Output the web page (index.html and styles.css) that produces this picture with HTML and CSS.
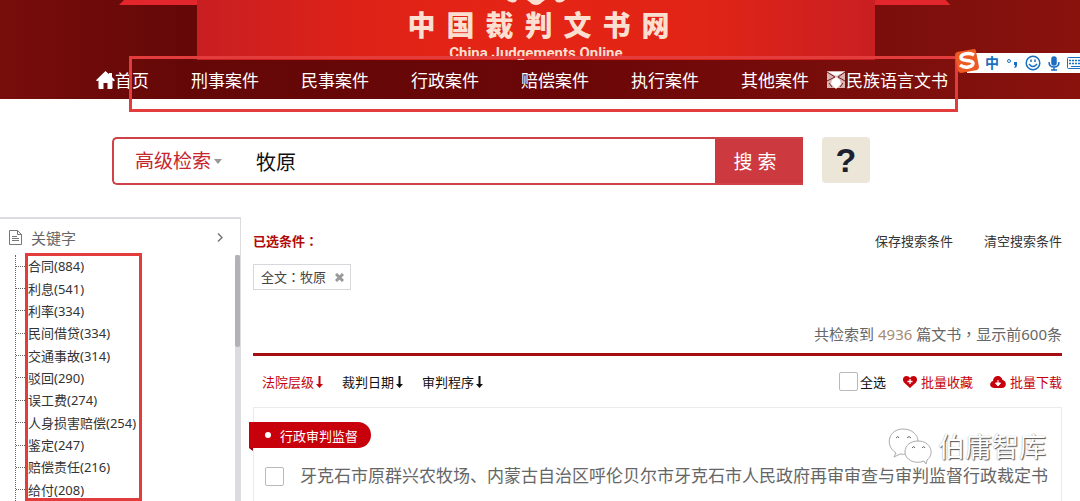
FILE: index.html
```html
<!DOCTYPE html>
<html lang="zh-CN">
<head>
    <meta charset="UTF-8">
    <meta name="viewport" content="width=device-width, initial-scale=1.0">
    <title>中国裁判文书网</title>
    <link rel="stylesheet" href="styles.css">
</head>
<body>
    <header class="header">
        <svg class="roof" viewBox="0 0 836 5" preserveAspectRatio="none" aria-hidden="true">
            <path d="M5 0H831L836 5H0Z" fill="#e3262b"/>
        </svg>
        <div class="banner">
            <svg class="emblem" width="58" height="5" viewBox="0 0 58 5" aria-hidden="true">
                <path d="M0 0H10Q9 3 5 2.500Q2 2 0 0ZM20 0H38Q35 2 33 4Q29 6 25 4Q23 2 20 0ZM48 0H58Q56 2 53 2.500Q49 3 48 0Z" fill="#fbdfd0"/>
            </svg>
            <h1 class="site-title">中国裁判文书网</h1>
            <p class="site-sub">China Judgements Online</p>
        </div>
        <nav class="nav">
            <a class="nav-home" href="#home">
                <svg width="19" height="18" viewBox="0 0 19 18" aria-hidden="true">
                    <path d="M9.500 0L13 3.300V2H16V6L19 9.200L17.800 10.300L16.500 9.500V17Q16.500 18 15.500 18H11.500V12H7.500V18H3.500Q2.500 18 2.500 17V9.500L1.200 10.300L0 9.200Z" fill="#fff"/>
                </svg>首页</a>
            <a href="#criminal">刑事案件</a>
            <a href="#civil">民事案件</a>
            <a href="#admin">行政案件</a>
            <a href="#compensation">赔偿案件</a>
            <a href="#execute">执行案件</a>
            <a class="nav-other" href="#other">其他案件</a>
            <a href="#language">
                <svg width="19" height="18" viewBox="0 0 19 18" aria-hidden="true">
                    <path d="M0 0H18V17H0Z" fill="#d8b5b3"/>
                    <path d="M1 1H17L9 5Z" fill="#fff"/>
                    <path d="M0 1L8 6L0 10M18 1L11 6L18 10M2 12L5 16M16 12L13 16" fill="none" stroke="#7a1d1d"/>
                    <path d="M5 9L9 6L13 9L14 13L9 18L4 13Z" fill="#fff"/>
                </svg>民族语言文书</a>
        </nav>
    </header>

    <form class="search">
        <div class="search-box">
            <select class="search-type" aria-label="检索方式">
                <option>高级检索</option>
            </select>
            <svg class="caret" width="8" height="5" viewBox="0 0 8 5" aria-hidden="true"><path d="M0 0H8L4 5Z" fill="#999"/></svg>
            <input class="search-input" type="text" value="牧原" aria-label="检索内容">
            <button class="search-btn" type="button">搜 索</button>
        </div>
        <button class="help-btn" type="button">?</button>
    </form>

    <div class="page">
        <aside class="sidebar">
            <h2 class="side-title">
                <svg width="13" height="15" viewBox="0 0 13 15" fill="none" stroke="#777" aria-hidden="true">
                    <path d="M.5 .5H8.500L12.500 4.500V14.500H.5ZM8.500 .5V4.500H12.500M3 6.500H8M3 8.500H10M3 10.500H10"/>
                </svg>
                <span>关键字</span>
                <svg class="side-arrow" width="6" height="9" viewBox="0 0 6 9" fill="none" stroke="#777" stroke-width="1.500" aria-hidden="true"><path d="M1 .5L5 4.500L1 8.500"/></svg>
            </h2>
            <div class="tree">
                <ul class="tree-list">
                    <li><a href="#k1">合同(884)</a></li>
                    <li><a href="#k2">利息(541)</a></li>
                    <li><a href="#k3">利率(334)</a></li>
                    <li><a href="#k4">民间借贷(334)</a></li>
                    <li><a href="#k5">交通事故(314)</a></li>
                    <li><a href="#k6">驳回(290)</a></li>
                    <li><a href="#k7">误工费(274)</a></li>
                    <li><a href="#k8">人身损害赔偿(254)</a></li>
                    <li><a href="#k9">鉴定(247)</a></li>
                    <li><a href="#k10">赔偿责任(216)</a></li>
                    <li><a href="#k11">给付(208)</a></li>
                </ul>
                <div class="scrollbar"><div class="thumb"></div></div>
                <div class="mark mark-tree"></div>
            </div>
        </aside>

        <main class="main">
            <div class="selected">
                <strong>已选条件<span class="mid" lang="zh-TW">：</span></strong>
                <a class="save" href="#save">保存搜索条件</a>
                <a href="#clear">清空搜索条件</a>
            </div>
            <div class="tag">全文<span class="mid" lang="zh-TW">：</span>牧原
                <button class="tag-close" type="button" aria-label="删除">
                    <svg width="9" height="9" viewBox="0 0 9 9" stroke="#999" stroke-width="3"><path d="M1 1L8 8M8 1L1 8"/></svg>
                </button>
            </div>
            <p class="count">共检索到 <span class="num">4936</span> 篇文书<span class="mid" lang="zh-TW">，</span>显示前600条</p>

            <div class="toolbar">
                <a class="sort active" href="#level">法院层级<svg width="7" height="12" viewBox="0 0 7 12" aria-hidden="true"><path d="M2.500 0H4.500V8H7L3.500 12L0 8H2.500Z" fill="currentColor"/></svg></a>
                <a class="sort" href="#date">裁判日期<svg width="7" height="12" viewBox="0 0 7 12" aria-hidden="true"><path d="M2.500 0H4.500V8H7L3.500 12L0 8H2.500Z" fill="currentColor"/></svg></a>
                <a class="sort" href="#program">审判程序<svg width="7" height="12" viewBox="0 0 7 12" aria-hidden="true"><path d="M2.500 0H4.500V8H7L3.500 12L0 8H2.500Z" fill="currentColor"/></svg></a>
                <label class="check-all"><input class="check" type="checkbox">全选</label>
                <a class="batch" href="#fav">
                    <svg width="14" height="12" viewBox="0 0 14 12" aria-hidden="true">
                        <path d="M7 12L1 6.500C-1 4 0 0 3.500 0Q6 0 7 2Q8 0 10.500 0C14 0 15 4 13 6.500Z" fill="#c7000b"/>
                        <path d="M7 3V8M4.500 5.500H9.500" stroke="#fff" stroke-width="1.300"/>
                    </svg>批量收藏</a>
                <a class="batch" href="#down">
                    <svg width="16" height="12" viewBox="0 0 16 12" aria-hidden="true">
                        <path d="M4 12C-1 12-1 6 3 5C3-1 11-2 12.500 4C17 5 17 12 12 12Z" fill="#c7000b"/>
                        <path d="M8 4V7H5.500L8 10L10.500 7H8" stroke="#fff" fill="#fff"/>
                    </svg>批量下载</a>
            </div>

            <article class="item">
                <div class="label">行政审判监督</div>
                <div class="item-title">
                    <input class="check" type="checkbox" id="doc1">
                    <label for="doc1">牙克石市原群兴农牧场、内蒙古自治区呼伦贝尔市牙克石市人民政府再审审查与审判监督行政裁定书</label>
                </div>
            </article>
        </main>
    </div>

    <div class="mark mark-nav"></div>

    <!-- 输入法工具条 -->
    <div class="ime">
        <svg class="ime-logo" width="26" height="24" viewBox="0 0 26 24" aria-hidden="true">
            <path d="M3 3L20 0Q22 0 22 2L25 18Q25 20 23 21L7 24Q5 24 4 22L1 6Q1 4 3 3Z" fill="#ec5b23"/>
            <path d="M20 6C15 3 6 5 7 9C8 13 18 10 19 14C19 18 11 20 6 16" fill="none" stroke="#fff" stroke-width="3.500"/>
        </svg>
        <span class="ime-text">中</span>
        <svg width="12" height="12" viewBox="0 0 12 12" aria-hidden="true">
            <circle cx="3" cy="4" r="1.500" fill="none" stroke="#1b6fc0"/>
            <path d="M8 5H11V8Q11 11 8 11Q9 10 9 8H8Z" fill="#1b6fc0"/>
        </svg>
        <svg width="16" height="16" viewBox="0 0 16 16" fill="none" stroke="#1b6fc0" stroke-width="1.500" aria-hidden="true">
            <circle cx="8" cy="8" r="6.800"/><path d="M6 4.500V7M10 4.500V7M4 9Q8 14 12 9"/>
        </svg>
        <svg width="12" height="15" viewBox="0 0 12 15" fill="none" stroke="#1b6fc0" stroke-width="1.500" aria-hidden="true">
            <rect x="4" y="1" width="4" height="8" rx="2" fill="#1b6fc0"/><path d="M1 6Q1 11 6 11Q11 11 11 6M6 11V14M3 14H9"/>
        </svg>
        <svg width="18" height="12" viewBox="0 0 18 12" fill="none" stroke="#1b6fc0" aria-hidden="true">
            <rect x=".5" y=".5" width="17" height="11" rx="1"/><path d="M2 3.500H16M2 6.500H16" stroke-width="1.500" stroke-dasharray="2 1"/><path d="M4 9.500H14"/>
        </svg>
    </div>

    <div class="watermark">
        <svg width="46" height="38" viewBox="0 0 46 38" fill="#fff" stroke="#aaa" aria-hidden="true">
            <path d="M7 29L9 25C-3 17 2 1 16 1C25 1 31 7 31 13C31 21 23 28 13 26Z"/>
            <path d="M39 36L37 33C27 37 18 31 18 24C18 17 24 13 31 13C44 13 48 26 40 32Z"/>
            <path d="M9 10Q11 7 12 10M20 10Q22 7 24 10M25 20Q27 17 28 20M35 20Q37 17 38 20" fill="none" stroke="#666"/>
        </svg>
        <span>伯庸智库</span>
    </div>
</body>
</html>
```
FILE: styles.css
```css
* {
    box-sizing: border-box;
}
body {
    margin: 0;
    min-height: 100vh;
    display: flex;
    flex-direction: column;
    position: relative;
    overflow-x: hidden;
    background-color: #fff;
    color: #333;
    font-family: "Noto Sans", "Noto Sans CJK SC", sans-serif;
    font-size: 13px;
}
a {
    color: inherit;
    text-decoration: none;
}
button, input, select {
    font-family: inherit;
    margin: 0;
    padding: 0;
}
h1, h2, p, ul {
    margin: 0;
    padding: 0;
    font-weight: normal;
}
/* 全角标点居中 */
.mid {
    font-family: "Noto Sans CJK TC", sans-serif;
}

/* 头部 */
.header {
    position: relative;
    background: linear-gradient(90deg, #780d0c 0%, #640807 17%, #6a0607 50%, #7c0f0c 84%, #8a120d 100%);
}
.roof {
    position: absolute;
    left: 11%;
    top: 0;
    width: 77%;
    height: 5px;
}
.banner {
    position: relative;
    height: 60px;
    margin: 0 19% 0 197px;
    display: flex;
    flex-direction: column;
    align-items: center;
    overflow: hidden;
    background: linear-gradient(90deg, #c81f22 0%, #df2217 25%, #e52515 50%, #e02416 75%, #c91f22 100%);
    color: #fbdfd0;
}
.emblem {
    display: block;
    flex: none;
}
.site-title {
    font-size: 28px;
    font-weight: 900;
    line-height: 40px;
    letter-spacing: 11px;
    padding-left: 16px;
}
.site-sub {
    font-family: Roboto, "Liberation Sans", sans-serif;
    font-size: 15px;
    font-weight: bold;
    line-height: 16px;
}
.nav {
    display: flex;
    align-items: center;
    height: 39px;
    padding-left: 96px;
    color: #fff;
    font-size: 17px;
    white-space: nowrap;
}
.nav a {
    display: flex;
    align-items: center;
    margin-right: 42px;
}
.nav .nav-other {
    margin-right: 18px;
}

/* 检索框 */
.search {
    display: flex;
    gap: 19px;
    padding: 38px 210px 32px 112px;
}
.search-box {
    flex: 1;
    display: flex;
    align-items: center;
    height: 48px;
    border: 2px solid #cf4247;
    border-right: 0;
    border-radius: 5px 0 0 5px;
}
.search-type {
    appearance: none;
    border: 0;
    background: none;
    margin-left: 21px;
    color: #c7262c;
    font-size: 19px;
}
.caret {
    margin-left: 2px;
}
.search-input {
    flex: 1;
    min-width: 0;
    margin-left: 34px;
    border: 0;
    outline: 0;
    color: #111;
    font-size: 20px;
}
.search-btn {
    align-self: stretch;
    width: 88px;
    padding-right: 8px;
    border: 0;
    background-color: #cc393f;
    color: #fff;
    font-size: 19px;
}
.help-btn {
    width: 48px;
    height: 46px;
    border: 0;
    border-radius: 4px;
    background-color: #ebe6d7;
    color: #1d2030;
    font-family: "Liberation Sans", Arial, sans-serif;
    font-size: 34px;
    font-weight: bold;
}

.page {
    flex: 1;
    display: flex;
}

/* 左侧关键字 */
.sidebar {
    width: 241px;
    display: flex;
    flex-direction: column;
    border-top: 2px solid #dcdce0;
    border-right: 1px solid #dcdce0;
}
.side-title {
    display: flex;
    align-items: center;
    gap: 9px;
    height: 36px;
    padding: 0 17px 0 9px;
    color: #666;
    font-size: 15px;
}
.side-arrow {
    margin-left: auto;
}
.tree {
    flex: 1;
    display: flex;
    position: relative;
}
.tree-list {
    flex: 1;
    display: grid;
    grid-auto-rows: 1fr;
    margin-left: 15px;
    border-left: 1px dotted #666;
    list-style: none;
}
.tree-list li {
    display: flex;
    align-items: center;
    line-height: 20px;
}
.tree-list li::before {
    content: "";
    width: 11px;
    margin-right: 1px;
    border-top: 1px dotted #666;
}
.scrollbar {
    width: 5px;
    background-color: #dcdce0;
}
.thumb {
    height: 92px;
    border-radius: 2px;
    background-color: #b3b1b6;
}

/* 右侧结果 */
.main {
    flex: 1;
    min-width: 0;
    display: flex;
    flex-direction: column;
    padding: 11px 18px 0 12px;
}
.selected {
    display: flex;
    align-items: center;
    height: 24px;
}
.selected strong {
    color: #b00a0a;
}
.save {
    margin: 0 31px 0 auto;
}
.tag {
    align-self: flex-start;
    display: flex;
    align-items: center;
    height: 26px;
    margin-top: 12px;
    padding: 0 6px 0 7px;
    border: 1px solid #d8d8dc;
    color: #444;
    line-height: 20px;
}
.tag-close {
    display: flex;
    margin-left: 9px;
    border: 0;
    background: none;
}
.count {
    margin-top: 33px;
    padding-bottom: 8px;
    border-bottom: 3px solid #a50d12;
    color: #666;
    font-size: 15px;
    line-height: 22px;
    text-align: right;
}
.num {
    color: #a98a72;
}
.toolbar {
    display: flex;
    align-items: center;
    height: 51px;
    padding-left: 9px;
    color: #111;
}
.sort {
    display: flex;
    align-items: center;
    gap: 2px;
    margin-right: 19px;
}
.sort.active, .batch {
    color: #c7000b;
}
.check-all {
    display: flex;
    align-items: center;
    gap: 2px;
    margin-left: auto;
}
.check {
    appearance: none;
    flex: none;
    width: 19px;
    height: 19px;
    border: 1px solid #bbb9c0;
    border-radius: 2px;
    background-color: #fff;
}
.batch {
    display: flex;
    align-items: center;
    gap: 4px;
    margin-left: 17px;
}
.item {
    flex: 1;
    padding-top: 14px;
    border: 1px solid #ebebed;
    border-bottom: 0;
}
.label {
    position: relative;
    display: inline-flex;
    align-items: center;
    gap: 9px;
    height: 26px;
    margin-left: -5px;
    padding: 0 13px 0 16px;
    border-radius: 0 13px 13px 0;
    background-color: #c7000b;
    color: #fff;
}
.label::before {
    content: "";
    width: 6px;
    height: 6px;
    border-radius: 50%;
    background-color: #fff;
}
.label::after {
    content: "";
    position: absolute;
    left: 0;
    top: 100%;
    border-top: 3px solid #8a0008;
    border-left: 4px solid transparent;
}
.item-title {
    display: flex;
    align-items: center;
    gap: 16px;
    padding: 16px 0 8px 11px;
    color: #666;
    font-size: 17px;
    line-height: 24px;
    white-space: nowrap;
}

/* 红框标注 */
.mark {
    position: absolute;
    border: 3px solid #e33c3c;
    pointer-events: none;
}
.mark-nav {
    left: 129px;
    top: 56px;
    width: 829px;
    height: 56px;
}
.mark-tree {
    left: 25px;
    top: -2px;
    bottom: 0;
    width: 117px;
}

.ime {
    position: absolute;
    right: 0;
    top: 53px;
    display: flex;
    align-items: center;
    gap: 7px;
    width: 113px;
    height: 20px;
    padding-left: 18px;
    background-color: #fff;
}
.ime svg, .ime span {
    flex: none;
}
.ime-logo {
    position: absolute;
    left: -13px;
    top: -4px;
}
.ime-text {
    color: #1b6fc0;
    font-size: 14px;
    font-weight: bold;
    line-height: 20px;
}
.watermark {
    position: absolute;
    right: 34px;
    bottom: 35px;
    display: flex;
    align-items: center;
    gap: 5px;
    color: #fff;
    font-size: 27px;
    line-height: 28px;
    text-shadow: 1px 1px 1px #555, 0 0 1px #999;
}
```
